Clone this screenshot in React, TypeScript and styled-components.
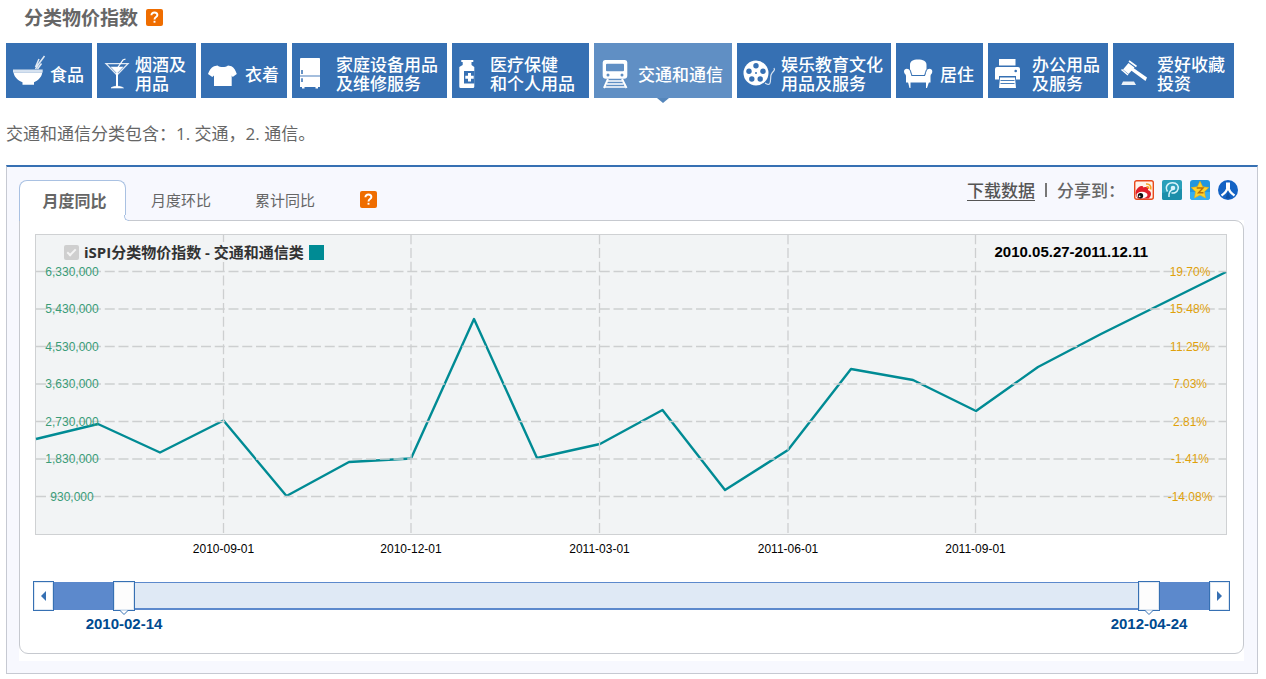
import React, { useState } from "react";
import styled, { createGlobalStyle, css } from "styled-components";

const cjk = `"Noto Sans CJK SC", sans-serif`;
const arial = `"Liberation Sans", ${cjk}`;
const humanist = `"Open Sans", ${cjk}`;
const blue = "#3670b3";
const slate = "#5c89cc";

const GlobalStyle = createGlobalStyle`
  *, *::before, *::after { box-sizing: border-box; }
  body { margin: 0; background: #fff; color: #666; font-family: ${cjk}; }
  button { font: inherit; margin: 0; padding: 0; border: 0; background: none; cursor: pointer; }
`;

const Page = styled.main`
  padding: 4px 8px 5px 6px;
`;

const Heading = styled.header`
  display: flex;
  align-items: center;
  gap: 8px;
  height: 26px;
  padding-left: 18px;
`;

const Title = styled.h1`
  margin: 0;
  font-size: 19px;
  line-height: 26px;
  font-weight: 700;
`;

const Help = styled.button`
  display: block;
  width: 17px;
  height: 17px;
  border-radius: 2px;
  background: #ef6d00;
  svg { display: block; }
`;

const Categories = styled.nav`
  display: flex;
  gap: 5px;
  margin-top: 13px;
`;

const Tile = styled.button<{ $w: number; $active?: boolean }>`
  position: relative;
  display: flex;
  align-items: center;
  gap: 3px;
  flex: 0 1 ${(p) => p.$w}px;
  height: 55px;
  padding: 5px 0 0 5px;
  background: ${(p) => (p.$active ? "#608fc4" : blue)};
  color: #fff;
  font-size: 17px;
  line-height: 19px;
  font-weight: 500;
  text-align: left;
  white-space: pre;
  ${(p) =>
    p.$active &&
    css`
      &::after {
        content: "";
        position: absolute;
        top: 100%;
        left: 50%;
        margin-left: -6px;
        border: 6px solid transparent;
        border-top: 5px solid #5586bb;
        border-bottom: 0;
      }
    `}
`;

const TileIcon = styled.svg`
  display: block;
  flex: none;
  height: 32px;
  overflow: visible;
`;

const Description = styled.p`
  margin: 22px 0 18px;
  font-family: ${humanist};
  font-size: 17px;
  line-height: 27px;
`;

const Panel = styled.section`
  border: 1px solid #c6c9d2;
  border-top: 2px solid ${blue};
  background: #f7f8fe;
  padding: 13px 13px 12px 12px;
`;

const PanelBar = styled.div`
  display: flex;
  align-items: flex-start;
  justify-content: space-between;
  height: 40px;
`;

const Tabs = styled.div`
  display: flex;
  align-items: flex-start;
`;

const Tab = styled.button<{ $active?: boolean }>`
  height: 40px;
  width: 104px;
  padding-left: 6px;
  font-size: 15px;
  line-height: 38px;
  color: #666;
  ${(p) =>
    p.$active &&
    css`
      position: relative;
      width: 107px;
      height: 41px;
      padding: 0 0 3px 4px;
      background: #fff;
      border: 1px solid #a9c1e2;
      border-bottom: 0;
      border-radius: 8px 8px 0 0;
      font-size: 16px;
      line-height: 36px;
      font-weight: 700;
      &::after {
        content: "";
        position: absolute;
        left: 100%;
        bottom: 0;
        margin-left: -1px;
        width: 5px;
        height: 6px;
        border-left: 1px solid #a9c1e2;
        border-bottom: 1px solid #a9c1e2;
        border-bottom-left-radius: 5px;
        background: #f7f8fe;
        box-shadow: -1px 1px 0 #fff;
      }
    `}
`;

const TabHelp = styled.div`
  padding: 11px 0 0 26px;
`;

const Share = styled.div`
  display: flex;
  align-items: center;
  height: 20px;
  padding-right: 6px;
  font-size: 17px;
  line-height: 20px;
  font-weight: 500;
  gap: 8px;
`;

const Download = styled.a`
  color: #555;
  text-underline-offset: 3px;
  text-decoration-thickness: 1px;
`;

const Divider = styled.span`
  width: 2px;
  height: 14px;
  margin: 0 2px;
  background: #777;
`;

const ShareLabel = styled.span`
  margin-right: 1px;
`;

const ShareLink = styled.a`
  display: block;
  width: 20px;
  height: 20px;
  svg { display: block; }
`;

const Sheet = styled.div`
  background: #fff;
  padding-bottom: 7px;
`;

const Card = styled.div`
  border: 1px solid #c6c9cf;
  border-radius: 0 9px 9px 9px;
  padding: 13px 13px 19px 13px;
`;

const Chart = styled.figure`
  position: relative;
  margin: 0 3px 0 2px;
`;

const Plot = styled.svg`
  display: block;
  width: 100%;
  height: auto;
  font-family: ${arial};
  font-size: 12px;
`;

const Legend = styled.figcaption`
  position: absolute;
  top: 8px;
  left: 29px;
  right: 79px;
  display: flex;
  justify-content: space-between;
  color: #333;
  font-size: 15px;
  line-height: 20px;
  font-weight: 700;
`;

const Series = styled.label`
  display: flex;
  align-items: center;
  gap: 5px;
  background: #f2f4f5;
  font-family: ${humanist};
`;

const Tick = styled.input`
  appearance: none;
  position: relative;
  width: 15px;
  height: 15px;
  margin: 0;
  border-radius: 2px;
  background: #cfcfcf;
  &:checked::after {
    content: "";
    position: absolute;
    left: 5px;
    top: 2px;
    width: 5px;
    height: 9px;
    border: solid #f4f4f4;
    border-width: 0 2px 2px 0;
    transform: rotate(45deg);
  }
`;

const Swatch = styled.i`
  width: 15px;
  height: 15px;
  background: #008b94;
`;

const Period = styled.span`
  font-family: ${arial};
  color: #000;
`;

const Scroller = styled.div`
  display: flex;
  align-items: flex-start;
  margin-top: 20px;
`;

const Step = styled.button`
  flex: none;
  display: grid;
  place-items: center;
  width: 21px;
  height: 30px;
  border: 1px solid ${blue};
  box-shadow: inset 0 0 0 1px #dfe8f2;
  background: #fff;
`;

const Track = styled.div`
  position: relative;
  flex: 1;
  height: 53px;
`;

const Rail = styled.div`
  height: 28px;
  margin-top: 1px;
  background: ${slate};
`;

const Selected = styled.div`
  height: 28px;
  background: #dfe9f5;
  border-top: 1px solid ${slate};
  border-bottom: 2px solid ${slate};
`;

const Range = styled.input`
  appearance: none;
  position: absolute;
  top: 0;
  left: 0;
  width: 100%;
  height: 30px;
  margin: 0;
  background: none;
  pointer-events: none;
  &::-webkit-slider-thumb {
    appearance: none;
    pointer-events: auto;
    width: 22px;
    height: 30px;
    border: 1px solid ${blue};
    background: #fdfdfd;
    box-shadow: inset 0 0 0 1px #dfe8f2;
    cursor: ew-resize;
  }
`;

const Marker = styled.output`
  position: absolute;
  top: 29px;
  width: 80px;
  margin-left: -29px;
  text-align: center;
  font-family: ${arial};
  font-size: 15px;
  line-height: 18px;
  font-weight: 700;
  color: #004a8f;
  pointer-events: none;
  svg { display: block; margin: 0 auto; }
`;

const HelpGlyph = () => (
  <svg width="17" height="17" viewBox="0 0 17 17" fill="none" stroke="#fff" strokeWidth="1.9">
    <path d="M5.4 6.3C5.4 4.4 6.700 3.500 8.400 3.500S11.400 4.500 11.400 6.100C11.400 8.200 8.500 8 8.500 10.500" />
    <path d="M8.500 11.800V13.700" />
  </svg>
);

const icons: Record<string, React.ReactNode> = {
  bowl: (
    <>
      <path d="M2 12.500H31.700V15.500H2Z" opacity=".8" />
      <path d="M2.500 15.500H31.300C30.500 20.500 27 23.600 23 25.200V27.700H11.500V25.200C7 23.500 3.500 20.500 2.500 15.500Z" />
      <path d="M24.500 12L28 6.500L33.500-1M26.500 12L30.500 6.500M24.500 10L28 2" stroke="#fff" strokeWidth="1.500" fill="none" opacity=".85" />
    </>
  ),
  glass: (
    <g fill="none" stroke="#fff" strokeWidth="1.300">
      <path d="M4 6.700H26L15 18Z" opacity=".85" />
      <path d="M8.500 9.700H21.500L15 16.500Z" fill="#fff" stroke="none" />
      <path d="M15 16V30" strokeWidth="2" />
      <path d="M9 31C11 28.700 19 28.700 21.500 31Z" fill="#fff" strokeWidth=".6" />
      <path d="M15.500 11L21 3L23.500 2" />
    </g>
  ),
  shirt: (
    <path d="M11.500 8.500C14 10.500 19.500 10.500 22 8.500L25.500 9.300C28 10.300 29.600 13.500 30.800 17L26.700 20L25.700 18.500V29H8V18.500L6.300 20L2 17C3.300 13.500 5 10.300 8 9.300Z" />
  ),
  fridge: (
    <>
      <path d="M4 1H22.300Q23 1 23 2V18H3V2Q3 1 4 1ZM3 20H23V30H21V31.500H18.500V30H7.500V31.500H5V30H3Z" />
      <path d="M3 18H23V20H3Z" opacity=".55" />
      <path d="M5 13V17M5 21.300V25" stroke="#3670b3" strokeWidth="1.500" />
    </>
  ),
  bottle: (
    <>
      <path d="M4.300 3H16.300V5H14.500V8L17.300 10V29.500Q17.300 31 16 31H3.700Q2.300 31 2.300 29.500V10L5.700 8V5H4.300Z" />
      <path d="M17.500 14H7V26.500H17.500Z" fill="#3670b3" />
      <path d="M12.500 16V24.500M8.300 20.200H16.700" stroke="#fff" strokeWidth="3" />
    </>
  ),
  train: (
    <>
      <path fillRule="evenodd" d="M6 3H26Q28.300 3 28.300 5.500V18.500Q28.300 21.700 25 21.700H7Q3.700 21.700 3.700 18.500V5.500Q3.700 3 6 3ZM8 6.800Q7 6.800 7 7.800V13.300Q7 14.300 8 14.300H24Q25 14.300 25 13.300V7.800Q25 6.800 24 6.800ZM9 16.500A1.500 1.500 0 1 0 9 19.500A1.500 1.500 0 1 0 9 16.500ZM23 16.500A1.500 1.500 0 1 0 23 19.500A1.500 1.500 0 1 0 23 16.500Z" />
      <path d="M9 22L5 31M23 22L27.500 31" stroke="#fff" strokeWidth="2" />
      <path d="M9 24H23M8 27H24.500M6 30H26" stroke="#fff" strokeWidth="1.300" />
    </>
  ),
  film: (
    <>
      <circle cx="14" cy="16" r="12.500" />
      <g fill="#3670b3">
        <circle cx="14" cy="8.700" r="2.700" />
        <circle cx="7" cy="14.200" r="2.700" />
        <circle cx="21" cy="14.200" r="2.700" />
        <circle cx="9.800" cy="22" r="2.700" />
        <circle cx="18.200" cy="22" r="2.700" />
        <circle cx="14" cy="16" r="1" />
      </g>
      <path d="M23 26C30 31 28 22 29 18C31 13 34 14 32 11" stroke="#fff" strokeWidth="1.200" fill="none" opacity=".8" />
    </>
  ),
  sofa: (
    <>
      <path d="M9 8C9 4 12 2.500 17 2.500S25.500 4 25.500 8V12L23.500 18H11L9 12Z" />
      <path d="M3 14.500C3 11 8 11 9 14L10.500 19H24L25.500 14C26.500 11 31.300 11 31.300 14.500C31.300 17 29.500 17 29.500 19V25.500H5V19C5 17 3 17 3 14.500Z" />
      <path d="M7 25L8.500 31H9.500V25ZM25 25V31H26L28 25Z" />
      <path d="M9.300 13L11 18.500H23.500L25.200 13" fill="none" stroke="#3670b3" strokeWidth=".6" />
    </>
  ),
  printer: (
    <>
      <path d="M6 2H22.500V8.500H6Z" />
      <path d="M4 10H25Q27 10 27 12V22.500H23V19H6V22.500H2V12Q2 10 4 10Z" />
      <circle cx="22.700" cy="14" r="1.300" fill="#3670b3" />
      <path d="M7 20.500H22L23 31H6Z" />
      <path d="M7.500 23.500H21.500M7.500 26.500H21.500" stroke="#3670b3" strokeWidth=".9" />
    </>
  ),
  hammer: (
    <>
      <path d="M10.500 6L16.500 10.500L10.500 17L5 12.500Z" />
      <path d="M11 4L18.500 9.500M3.500 12.500L10 18" stroke="#fff" strokeWidth="1.600" />
      <path d="M14 10L29 20.500L27.500 24L12.500 13Z" />
      <path d="M5 24.500H16L18 28H3.300Z" opacity=".9" />
    </>
  ),
};

const categories = [
  { icon: "bowl", text: "食品", w: 86 },
  { icon: "glass", text: "烟酒及\n用品", w: 99, slim: true },
  { icon: "shirt", text: "衣着", w: 86 },
  { icon: "fridge", text: "家庭设备用品\n及维修服务", w: 155 },
  { icon: "bottle", text: "医疗保健\n和个人用品", w: 137, slim: true },
  { icon: "train", text: "交通和通信", w: 138 },
  { icon: "film", text: "娱乐教育文化\n用品及服务", w: 154 },
  { icon: "sofa", text: "居住", w: 87 },
  { icon: "printer", text: "办公用品\n及服务", w: 120 },
  { icon: "hammer", text: "爱好收藏\n投资", w: 121 },
];

const shares = [
  {
    name: "新浪微博",
    art: (
      <>
        <rect x=".7" y=".7" width="18.600" height="18.600" rx="2" fill="#fff3ea" stroke="#e8491c" strokeWidth="1.400" />
        <path d="M2 10.500C4 6.500 8.500 4.500 9.500 7.500C12.500 6.500 15 7 14 10C18 11.500 18 16 14.500 18.500H4C1.500 16 1 13 2 10.500Z" fill="#e0202a" />
        <ellipse cx="8" cy="15" rx="5.500" ry="3.300" fill="#fff" />
        <circle cx="6.500" cy="15.800" r="2.700" fill="#111" />
        <circle cx="5.600" cy="16.300" r=".9" fill="#fff" />
        <path d="M12 4C15.500 3.500 17.500 6 16.700 9.500M12.500 6.700C14.500 6.500 15 7.500 14.600 9" fill="none" stroke="#f5a020" strokeWidth="1.500" />
      </>
    ),
  },
  {
    name: "腾讯微博",
    art: (
      <>
        <rect width="20" height="20" rx="2" fill="#2a9fba" />
        <path d="M0 13L20 9V18Q20 20 18 20H2Q0 20 0 18Z" fill="#1c8eaa" />
        <path d="M7 17C6.500 13 8 10.500 11 9M5.500 11.500C2.500 6.500 6 2.800 10.500 2.800C15 2.800 17 6 16 9.300C15 12.500 12 13.500 9.500 12.700" fill="none" stroke="#d7f3fa" strokeWidth="1.500" />
        <circle cx="11" cy="8" r="2.300" fill="#d7f3fa" />
      </>
    ),
  },
  {
    name: "QQ空间",
    art: (
      <>
        <rect width="20" height="20" rx="3" fill="#2196e0" />
        <path d="M0 12H20V17Q20 20 17 20H3Q0 20 0 17Z" fill="#36aef0" />
        <path d="M10 1.300L12.700 6.800L18.700 7.600L14.400 11.800L15.500 17.900L10 15L4.500 17.900L5.600 11.800L1.300 7.600L7.300 6.800Z" fill="#ffd22b" stroke="#f6b000" strokeWidth=".6" />
        <path d="M6.700 8H13L8.500 12.700H13.500" fill="none" stroke="#b5700a" strokeWidth="1.400" />
      </>
    ),
  },
  {
    name: "人人网",
    art: (
      <>
        <circle cx="10" cy="10" r="10" fill="#1463c4" />
        <path d="M10 6C10.500 10 12.500 13 16.500 15.500M10 6C9.500 10 7.500 13 3.500 15.500" fill="none" stroke="#fff" strokeWidth="2.200" />
        <path d="M8 2.500H12V8L10 11L8 8Z" fill="#fff" />
        <path d="M10 11.500L7.500 18.500H12.500Z" fill="#0d4fa3" />
      </>
    ),
  },
];

const gridRows = [
  { y: 37.5, left: "6,330,000", right: "19.70%" },
  { y: 75, left: "5,430,000", right: "15.48%" },
  { y: 112.5, left: "4,530,000", right: "11.25%" },
  { y: 150, left: "3,630,000", right: "7.03%" },
  { y: 187.5, left: "2,730,000", right: "2.81%" },
  { y: 225, left: "1,830,000", right: "-1.41%" },
  { y: 262.5, left: "930,000", right: "-14.08%" },
];

const gridColumns = [
  { x: 188.5, label: "2010-09-01" },
  { x: 376, label: "2010-12-01" },
  { x: 564.5, label: "2011-03-01" },
  { x: 753, label: "2011-06-01" },
  { x: 940.5, label: "2011-09-01" },
];

const line =
  "1,205 63,190 125,218.5 188.5,186.5 251.500,262 314,228 376,224.500 439,85 502,224 565,210 627.500,176 690,256 753,216 816,135 878,146 941,177 1003,133 1066,100 1191,38";

const TRAVEL = 1133;
const at = (v: number) => `calc((100% - 22px) * ${v / TRAVEL})`;

export default function App() {
  const [category, setCategory] = useState(5);
  const [tab, setTab] = useState(0);
  const [from, setFrom] = useState(59);
  const [to, setTo] = useState(1084);

  return (
    <Page>
      <GlobalStyle />
      <Heading>
        <Title>分类物价指数</Title>
        <Help aria-label="帮助"><HelpGlyph /></Help>
      </Heading>

      <Categories>
        {categories.map((c, i) => (
          <Tile key={c.icon} $w={c.w} $active={i === category} onClick={() => setCategory(i)}>
            <TileIcon width={c.slim ? 30 : 36} viewBox={`0 0 ${c.slim ? 30 : 36} 32`} fill="#fff">
              {icons[c.icon]}
            </TileIcon>
            <span>{c.text}</span>
          </Tile>
        ))}
      </Categories>

      <Description>交通和通信分类包含：1. 交通，2. 通信。</Description>

      <Panel>
        <PanelBar>
          <Tabs role="tablist">
            {["月度同比", "月度环比", "累计同比"].map((t, i) => (
              <Tab key={t} role="tab" aria-selected={i === tab} $active={i === tab} onClick={() => setTab(i)}>
                {t}
              </Tab>
            ))}
            <TabHelp>
              <Help aria-label="帮助"><HelpGlyph /></Help>
            </TabHelp>
          </Tabs>
          <Share>
            <Download href="#download">下载数据</Download>
            <Divider />
            <ShareLabel>分享到：</ShareLabel>
            {shares.map((s) => (
              <ShareLink key={s.name} href="#share" aria-label={s.name}>
                <svg width="20" height="20" viewBox="0 0 20 20">{s.art}</svg>
              </ShareLink>
            ))}
          </Share>
        </PanelBar>

        <Sheet>
          <Card>
            <Chart>
              <Plot viewBox="0 0 1192 327">
                <rect x=".5" y=".5" width="1191" height="300" fill="#f2f4f5" stroke="#cfd1d3" />
                <polyline points={line} fill="none" stroke="#008b94" strokeWidth="2.400" strokeLinejoin="round" />
                <g stroke="#cdcfd0" strokeWidth="1.300" strokeDasharray="10 3.750">
                  {gridRows.map((r) => <path key={r.y} d={`M1 ${r.y}H1191`} />)}
                  {gridColumns.map((c) => <path key={c.x} d={`M${c.x} 299V1`} />)}
                </g>
                <g textAnchor="middle">
                  {gridRows.map((r) => (
                    <g key={r.y}>
                      <text x="37" y={r.y + 4} fill="#3a9c78">{r.left}</text>
                      <text x="1155" y={r.y + 4} fill="#e0a10b">{r.right}</text>
                    </g>
                  ))}
                  {gridColumns.map((c) => <text key={c.x} x={c.x} y="319" fill="#000">{c.label}</text>)}
                </g>
              </Plot>
              <Legend>
                <Series>
                  <Tick type="checkbox" defaultChecked disabled />
                  iSPI分类物价指数 - 交通和通信类
                  <Swatch />
                </Series>
                <Period>2010.05.27-2011.12.11</Period>
              </Legend>
            </Chart>

            <Scroller>
              <Step aria-label="向前" onClick={() => setFrom(Math.max(0, from - 10))}>
                <svg width="5" height="10" viewBox="0 0 5 10"><path d="M5 0V10L0 5Z" fill={blue} /></svg>
              </Step>
              <Track>
                <Rail>
                  <Selected style={{ marginLeft: at(from), marginRight: at(TRAVEL - to) }} />
                </Rail>
                <Range type="range" aria-label="开始日期" min={0} max={TRAVEL} value={from} onChange={(e) => setFrom(Math.min(+e.target.value, to))} />
                <Range type="range" aria-label="结束日期" min={0} max={TRAVEL} value={to} onChange={(e) => setTo(Math.max(+e.target.value, from))} />
                {[{ v: from, d: "2010-02-14" }, { v: to, d: "2012-04-24" }].map((m) => (
                  <Marker key={m.d} style={{ left: at(m.v) }}>
                    <svg width="10" height="5" viewBox="0 0 10 5"><path d="M1 .5L5 4.500L9 .5" fill="#fff" stroke={blue} /><path d="M2 0H8" stroke="#fff" /></svg>
                    {m.d}
                  </Marker>
                ))}
              </Track>
              <Step aria-label="向后" onClick={() => setTo(Math.min(TRAVEL, to + 10))}>
                <svg width="5" height="10" viewBox="0 0 5 10"><path d="M0 0V10L5 5Z" fill={blue} /></svg>
              </Step>
            </Scroller>
          </Card>
        </Sheet>
      </Panel>
    </Page>
  );
}
